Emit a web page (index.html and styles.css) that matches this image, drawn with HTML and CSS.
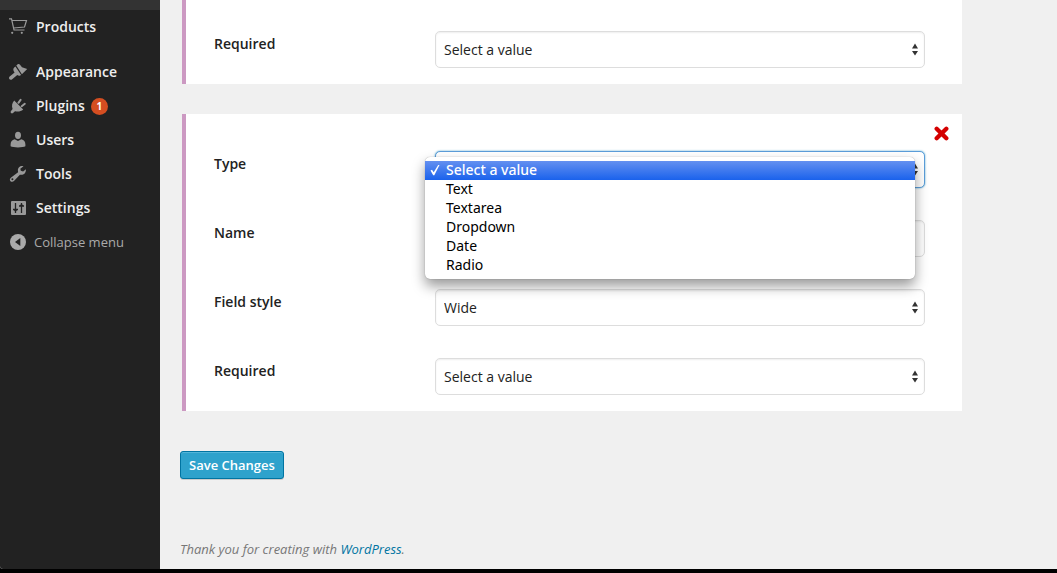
FILE: index.html
```html
<!DOCTYPE html>
<html lang="en">
<head>
<meta charset="utf-8">
<title>Form fields</title>
<link rel="stylesheet" href="styles.css">
</head>
<body>
<div class="page">
  <nav class="sidebar" aria-label="Main menu">
    <div class="sidebar-current"></div>
    <ul class="menu">
      <li><a class="menu-link" href="#">
        <svg class="icon" viewBox="0 0 20 20" fill="none" stroke="currentColor" stroke-width="1.2"><path d="M1 1.800h2.500l2.500 11.200h10.500M4 3.500h14.500l-2 6.500-11 1"/><g fill="currentColor" stroke="none"><circle cx="4.200" cy="15.800" r="1.100"/><circle cx="13.800" cy="15.800" r="1.100"/></g></svg>
        <span>Products</span></a></li>
      <li class="menu-group"><a class="menu-link" href="#">
        <svg class="icon" viewBox="0 0 20 20" fill="currentColor"><path d="M8.300 3.600 10 2.100c.8-.4 1.500 0 2 .6l2 2.500 5.200 1.800-5.300 5.200z"/><path d="m7.400 4.400 5.700 8.500-1.500.8c-.7.200-1.600-.2-2.300-.6L4.200 17.300c-1 .8-2.400.6-2.900-.3-.5-.8-.3-1.700.4-2.400l4.900-4.100C5.300 8.700 4.800 7 6 5.700z"/></svg>
        <span>Appearance</span></a></li>
      <li><a class="menu-link" href="#">
        <svg class="icon" viewBox="0 0 20 20" fill="currentColor"><path d="m6.200 4.500 9 9c-2.300 2-5.200 2.600-8.200 1.700l-2 1.900c-.7.500-1.500.4-2-.1s-.5-1.200 0-1.900l1.600-2C3.500 10 4 7 6.200 4.500z"/><path d="m10.400 6.800 2.200-3M13.700 10.200l3.100-2.400" fill="none" stroke="currentColor" stroke-width="2" stroke-linecap="round"/></svg>
        <span>Plugins</span><span class="count">1</span></a></li>
      <li><a class="menu-link" href="#">
        <svg class="icon" viewBox="0 0 20 20" fill="currentColor"><ellipse cx="10" cy="5.300" rx="3" ry="3.600"/><path d="M6.600 9.300 10 11l3.400-1.700c2.500.5 4 2.500 4 5.200v1.800c-2.300 1.500-12.500 1.500-14.800 0v-1.800c0-2.700 1.500-4.700 4-5.200z"/></svg>
        <span>Users</span></a></li>
      <li><a class="menu-link" href="#">
        <svg class="icon" viewBox="0 0 20 20" fill="currentColor"><path fill-rule="evenodd" d="M15.500 2.300c-3-.8-5.800 1.200-5.600 4.300l.2 1.600-7 5.300c-1.500 1.200-1.600 2.700-.6 3.700s2.600.9 3.700-.4l5.700-6.100c3.500.7 6.300-1.500 6-5.500l-2.800 2.300-2.300-.7-.5-2.100zM4.400 14.300a1 1 0 1 1 0 2 1 1 0 0 1 0-2z"/></svg>
        <span>Tools</span></a></li>
      <li><a class="menu-link" href="#">
        <svg class="icon" viewBox="0 0 20 20"><rect x="3" y="3" width="15" height="14" rx="1" fill="currentColor"/><path d="M7.500 5v10M13.500 5v10M5 11.500h5M11 8h5" fill="none" stroke="#222" stroke-width="1.300"/><path d="M5.500 11.500h4l-2 2.500zM11.500 8h4l-2-2.500z" fill="#222"/></svg>
        <span>Settings</span></a></li>
      <li><button class="menu-link collapse" type="button">
        <svg class="icon" viewBox="0 0 20 20"><circle cx="10" cy="10" r="8" fill="currentColor"/><path d="M12.300 6v8L7 10z" fill="#222"/></svg>
        <span>Collapse menu</span></button></li>
    </ul>
  </nav>

  <main class="content">
    <section class="panel panel-first">
      <div class="row">
        <label for="required-1">Required</label>
        <div class="control select"><select id="required-1"><option>Select a value</option></select><svg class="arrows" viewBox="0 0 6 12"><path d="M0 5h6L3 0zM0 7.500h6L3 12z"/></svg></div>
      </div>
    </section>

    <section class="panel">
      <button class="remove" type="button" aria-label="Remove field"><svg viewBox="0 0 14 14"><path d="m2.500 2.500 9 9M11.500 2.500l-9 9"/></svg></button>
      <div class="row">
        <label for="type">Type</label>
        <div class="control select">
          <select class="active" id="type"><option>Select a value</option></select><svg class="arrows" viewBox="0 0 6 12"><path d="M0 5h6L3 0zM0 7.500h6L3 12z"/></svg>
          <ul class="popup" role="listbox" aria-label="Type">
            <li class="selected" role="option" aria-selected="true"><svg class="check" viewBox="0 0 10 12"><path d="M.5 6.500 2 5.700l1.700 2.600L8.200 1h1.300L4.300 11.300H3.200z"/></svg>Select a value</li>
            <li role="option">Text</li>
            <li role="option">Textarea</li>
            <li role="option">Dropdown</li>
            <li role="option">Date</li>
            <li role="option">Radio</li>
          </ul>
        </div>
      </div>
      <div class="row">
        <label for="name">Name</label>
        <div class="control"><input id="name" type="text"></div>
      </div>
      <div class="row">
        <label for="style">Field style</label>
        <div class="control select"><select id="style"><option>Wide</option></select><svg class="arrows" viewBox="0 0 6 12"><path d="M0 5h6L3 0zM0 7.500h6L3 12z"/></svg></div>
      </div>
      <div class="row">
        <label for="required-2">Required</label>
        <div class="control select"><select id="required-2"><option>Select a value</option></select><svg class="arrows" viewBox="0 0 6 12"><path d="M0 5h6L3 0zM0 7.500h6L3 12z"/></svg></div>
      </div>
    </section>

    <button class="save" type="submit">Save Changes</button>
    <footer class="footer">Thank you for creating with <a href="#">WordPress</a>.</footer>
  </main>
</div>
</body>
</html>
```

FILE: styles.css
```css
* { box-sizing: border-box; }
body {
  margin: 0;
  background: #000;
  color: #222;
  font: 14px/20px "Open Sans", sans-serif;
}
button, input, select { font: inherit; }
ul { margin: 0; padding: 0; list-style: none; }

.page {
  display: flex;
  min-height: calc(100vh - 4px);
  background: #f0f0f0;
  border-bottom-left-radius: 3px;
}

/* Sidebar */
.sidebar {
  flex: 0 0 160px;
  background: #222;
  border-bottom-left-radius: 3px;
}
.sidebar-current { height: 10px; background: #333; }
.menu-group { margin-top: 11px; }
.menu-link {
  display: flex;
  align-items: center;
  width: 100%;
  height: 34px;
  padding: 0 8px;
  color: #eee;
  font-weight: 600;
  text-decoration: none;
}
.icon { width: 20px; height: 20px; margin-right: 8px; color: #999; }
.count {
  width: 17px;
  height: 17px;
  margin-left: 6px;
  border-radius: 50%;
  background: #d54e21;
  color: #fff;
  font-size: 10px;
  font-weight: 700;
  line-height: 17px;
  text-align: center;
}
.collapse {
  border: 0;
  background: none;
  color: #aaa;
  font-size: 13px;
  font-weight: 400;
}
.collapse .icon { margin-right: 6px; color: #aaa; }

/* Field panels */
.content { flex: 1; padding: 0 95px 0 20px; }
.panel {
  position: relative;
  display: grid;
  gap: 32px;
  margin: 0 0 30px 2px;
  padding: 37px 37px 16px 28px;
  border-left: 4px solid #cc99c2;
  background: #fff;
}
.panel-first { padding-top: 31px; }
.row {
  display: grid;
  grid-template-columns: 221px 1fr;
  align-items: start;
}
.row label { padding-top: 3px; font-weight: 600; }
.control { position: relative; }
.control select, .control input {
  display: block;
  width: 100%;
  height: 37px;
  padding: 0 8px;
  border: 1px solid #ddd;
  border-radius: 5px;
  outline: 0;
  background: #fff;
  box-shadow: inset 0 1px 2px rgba(0, 0, 0, .07);
  color: #222;
  appearance: none;
}
.control .active {
  border-color: #5b9dd9;
  box-shadow: 0 0 2px rgba(30, 140, 190, .8);
}
.arrows {
  position: absolute;
  top: 12px;
  right: 7px;
  width: 6px;
  height: 13px;
  fill: #333;
  pointer-events: none;
}
.remove {
  position: absolute;
  top: 12px;
  right: 13px;
  width: 15px;
  height: 15px;
  padding: 0;
  border: 0;
  background: none;
}
.remove svg {
  display: block;
  fill: none;
  stroke: #d40000;
  stroke-width: 4;
  stroke-linecap: round;
}

/* Open list */
.popup {
  position: absolute;
  z-index: 1;
  top: 6px;
  left: -10px;
  right: 10px;
  padding: 4px 0;
  border-radius: 5px;
  background: #fff;
  box-shadow: 0 0 1px rgba(0, 0, 0, .4), 0 7px 13px rgba(0, 0, 0, .4);
  color: #000;
  font: 14px/19px "Noto Sans", sans-serif;
}
.popup li {
  position: relative;
  height: 19px;
  padding-left: 21px;
  line-height: 17px;
}
.popup .selected {
  background: linear-gradient(#6490f0, #1a62ec);
  color: #fff;
  font-weight: 500;
}
.check {
  position: absolute;
  top: 3px;
  left: 5px;
  width: 10px;
  height: 12px;
  fill: #fff;
}

.save {
  display: block;
  height: 28px;
  margin-top: 40px;
  padding: 0 8px;
  border: 1px solid #0074a2;
  border-radius: 3px;
  background: #2ea2cc;
  box-shadow: inset 0 1px 0 rgba(120, 200, 230, .5), 0 1px 0 rgba(0, 0, 0, .15);
  color: #fff;
  font-size: 13px;
  font-weight: 600;
}
.footer {
  margin-top: 60px;
  color: #777;
  font-size: 13px;
  font-style: italic;
}
.footer a { color: #0074a2; text-decoration: none; }
```
